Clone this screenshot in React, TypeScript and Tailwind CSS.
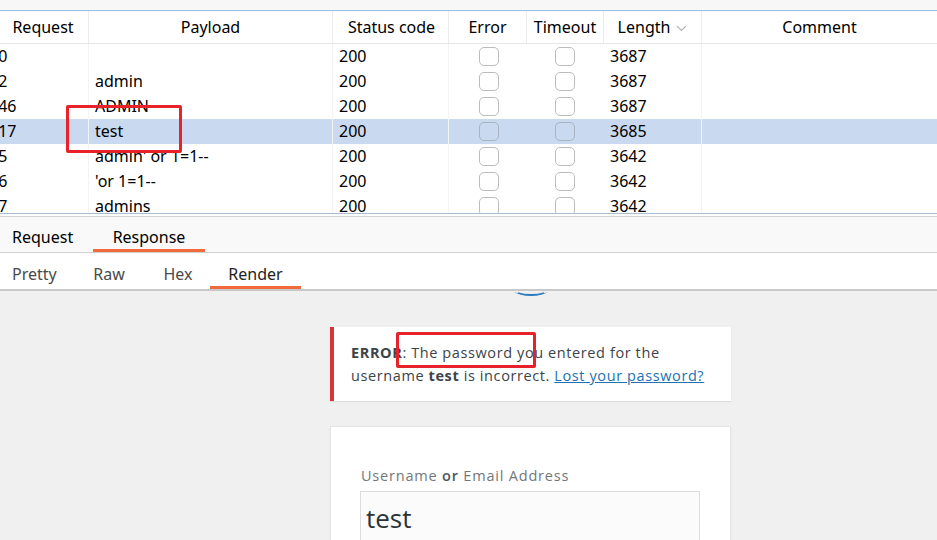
import React from "react";

const cols = "grid-cols-[89px_244px_116px_78px_77px_98px_1fr]";

type Row = { req: string; payload: string; status: string; len: string; sel?: boolean };

const rows: Row[] = [
  { req: "10", payload: "", status: "200", len: "3687" },
  { req: "12", payload: "admin", status: "200", len: "3687" },
  { req: "146", payload: "ADMIN", status: "200", len: "3687" },
  { req: "117", payload: "test", status: "200", len: "3685", sel: true },
  { req: "15", payload: "admin' or 1=1--", status: "200", len: "3642" },
  { req: "16", payload: "'or 1=1--", status: "200", len: "3642" },
  { req: "17", payload: "admins", status: "200", len: "3642" },
];

function Box({ sel }: { sel?: boolean }) {
  return (
    <div
      className={`w-[20px] h-[19px] rounded-[5px] border-[1.5px] ${
        sel ? "border-[#a9b3c0] bg-[#c9d9ef]" : "border-[#bcbcbc] bg-white"
      }`}
    />
  );
}

export default function App() {
  const font = { fontFamily: '"Noto Sans", "Liberation Sans", sans-serif' };
  return (
    <div className="relative w-[937px] h-[540px] overflow-hidden bg-[#f0f0f1]" style={font}>
      {/* top strip */}
      <div className="h-[11px] bg-[#f7f7f7] border-b border-[#9dbfe6]" />
      {/* header */}
      <div className={`grid ${cols} h-[33px] bg-white border-b border-[#e6e6e6] text-[16px] text-black`}>
        <div className="flex items-center justify-center border-r border-[#ececec] pr-[2px]">Request</div>
        <div className="flex items-center justify-center border-r border-[#ececec]">Payload</div>
        <div className="flex items-center justify-center border-r border-[#ececec] pl-[2px]">Status code</div>
        <div className="flex items-center justify-center border-r border-[#ececec]">Error</div>
        <div className="flex items-center justify-center border-r border-[#ececec]">Timeout</div>
        <div className="flex items-center justify-center gap-[6px] border-r border-[#ececec]">
          <span>Length</span>
          <svg width="11" height="7" viewBox="0 0 11 7" className="mt-[2px]">
            <path d="M1 1 L5.5 5.5 L10 1" fill="none" stroke="#b5b5b5" strokeWidth="1.2" />
          </svg>
        </div>
        <div className="flex items-center justify-center">Comment</div>
      </div>
      {/* body */}
      <div className="h-[170px] overflow-hidden bg-white border-b border-[#a7bbd3]">
        {rows.map((r, i) => (
          <div
            key={i}
            className={`grid ${cols} h-[25px] text-[16px] text-black leading-[25px] ${r.sel ? "bg-[#c9d9ef]" : "bg-white"}`}
          >
            <div className="overflow-hidden whitespace-nowrap border-r border-[#f3f3f3]">
              <span className="inline-block ml-[-11px]">{r.req}</span>
            </div>
            <div className="pl-[6px] border-r border-[#f3f3f3] whitespace-nowrap">{r.payload}</div>
            <div className="pl-[6px] border-r border-[#f3f3f3]">{r.status}</div>
            <div className="flex items-center justify-center pl-[1px]">
              <Box sel={r.sel} />
            </div>
            <div className="flex items-center justify-center pr-[1px]">
              <Box sel={r.sel} />
            </div>
            <div className="pl-[6px] border-r border-[#f3f3f3]">{r.len}</div>
            <div />
          </div>
        ))}
      </div>
      <div className="h-[3px] bg-white border-b border-[#d2d2d2]" />
      {/* tabs */}
      <div className="h-[36px] bg-[#f9f9f9] border-b border-[#d0d0d0] flex items-stretch text-[16px] text-black">
        <div className="w-[93px] flex items-center pl-[12px] pt-[4px]">Request</div>
        <div className="w-[112px] flex items-center justify-center border-b-[3px] border-[#f26a3c] pt-[7px]">Response</div>
      </div>
      {/* sub tabs */}
      <div className="h-[38px] bg-white border-b-2 border-[#c8c8c8] flex items-stretch text-[16px]">
        <div className="w-[82px] flex items-center pl-[12px] pt-[5px] text-[#4a4a4a]">Pretty</div>
        <div className="w-[70px] flex items-center justify-center text-[#4a4a4a] pr-[16px] pt-[5px]">Raw</div>
        <div className="w-[58px] flex items-center justify-center text-[#4a4a4a] pr-[6px] pt-[5px]">Hex</div>
        <div className="w-[91px] flex items-center justify-center border-b-[3px] border-[#f26a3c] pt-[8px] text-[#222]">Render</div>
      </div>
      {/* render area */}
      <div className="ml-[330px] w-[401px] flex flex-col" style={{ fontFamily: '"Open Sans", "Noto Sans", sans-serif' }}>
        <div className="h-[36px] flex justify-center overflow-hidden">
          <svg width="40" height="7" viewBox="0 0 40 7" className="ml-[1px] mt-[1px]">
            <path d="M3 0.5 Q20 7 37 0.5 Q20 3.5 3 0.5 Z" fill="#2271b1" />
            <path d="M7 1 Q20 5.5 33 1" fill="none" stroke="#2f7fc0" strokeWidth="1.6" />
          </svg>
        </div>
        <div className="bg-white border-l-4 border-[#d63638] shadow-[0_1px_1px_rgba(0,0,0,0.08)] pl-[17px] pr-[10px] py-[14px] text-[14.5px] tracking-[0.6px] leading-[23px] text-[#3c434a] whitespace-nowrap">
          <div>
            <strong>ERROR</strong>: The password you entered for the
          </div>
          <div>
            username <strong>test</strong> is incorrect.{" "}
            <span className="text-[#2271b1] underline">Lost your password?</span>
          </div>
        </div>
        <div className="mt-[25px] bg-white border border-[#e2e4e7] shadow-[0_1px_3px_rgba(0,0,0,0.04)] px-[29px] pt-[36px] h-[140px]">
          <div className="text-[14.5px] tracking-[0.8px] leading-[26px] text-[#73777c] ml-[1px] whitespace-nowrap">
            Username <span className="text-[#50575e] font-semibold">or</span> Email Address
          </div>
          <div className="mt-[2px] w-[340px] h-[60px] bg-[#fbfbfb] border border-[#dcdcde] pl-[5px] text-[26px] leading-[52px] text-[#2c3338]">
            test
          </div>
        </div>
      </div>
      {/* red annotation boxes */}
      <div className="absolute left-[66px] top-[105px] w-[116px] h-[48px] border-[3px] border-[#e8222b] rounded-[2px]" />
      <div className="absolute left-[396px] top-[332px] w-[140px] h-[36px] border-[3px] border-[#e8222b] rounded-[2px]" />
    </div>
  );
}
